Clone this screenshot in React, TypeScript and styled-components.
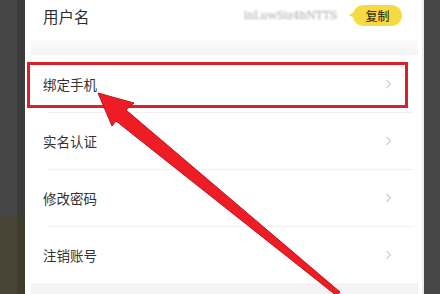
import React from "react";
import styled, { createGlobalStyle } from "styled-components";

const Global = createGlobalStyle`
  html, body { margin: 0; padding: 0; }
  body {
    width: 440px; height: 294px; overflow: hidden;
    font-family: "Noto Sans CJK SC", "Noto Sans", sans-serif;
    background: #454545;
  }
`;

const Page = styled.div`
  position: relative;
  display: flex;
  width: 440px;
  height: 294px;
`;

const LeftEdge = styled.div`
  width: 25px;
  display: grid;
  grid-template-columns: 17px 8px;
  grid-template-rows: 215px 1fr;
`;

const EdgeCell = styled.div<{ $tone: string }>`
  background: ${(p) => p.$tone};
`;

const RightEdge = styled.div`
  width: 16px;
  background: #474747;
  border-left: 2px solid #ececec;
`;

const Panel = styled.div`
  flex: 1;
  background: #ffffff;
  display: flex;
  flex-direction: column;
  padding: 0 4px 0 6px;
`;

const UserRow = styled.div`
  height: 40px;
  box-sizing: border-box;
  padding: 0 12px 9px 12px;
  display: flex;
  align-items: center;
`;

const UserLabel = styled.span`
  font-size: 15.5px;
  color: #2e2e2e;
  flex: 1;
`;

const UserName = styled.span`
  font-family: "DejaVu Serif", serif;
  font-size: 11px;
  color: #a8a8a8;
  filter: blur(1.1px);
  letter-spacing: -0.3px;
  margin-right: 16px;
`;

const CopyButton = styled.span`
  position: relative;
  width: 49px;
  height: 21px;
  border-radius: 11px;
  background: #f6da43;
  color: #3d3717;
  font-size: 12px;
  font-weight: 500;
  display: flex;
  align-items: center;
  justify-content: center;
  margin-right: 4px;
  &::before {
    content: "";
    position: absolute;
    left: -4px;
    top: 7px;
    border-style: solid;
    border-width: 3.5px 5px 3.5px 0;
    border-color: transparent #f6da43 transparent transparent;
  }
`;

const GapBand = styled.div`
  height: 15px;
  background: linear-gradient(#fcfcfc, #f3f3f3);
`;

const ItemRow = styled.div<{ $line: boolean }>`
  position: relative;
  height: 57px;
  display: flex;
  align-items: center;
  padding: 0 26px 0 12px;
  &::before {
    content: "";
    position: absolute;
    top: 0;
    left: 17px;
    right: 4px;
    height: 1px;
    background: ${(p) => (p.$line ? "#f1f1f1" : "transparent")};
  }
`;

const ItemLabel = styled.span`
  flex: 1;
  font-size: 13.5px;
  color: #333333;
`;

const Chevron = styled.svg`
  width: 7px;
  height: 10px;
`;

const BottomBand = styled.div`
  flex: 1;
  background: #f3f3f3;
`;

const Highlight = styled.div`
  position: absolute;
  left: 27px;
  top: 62px;
  width: 381px;
  height: 46px;
  box-sizing: border-box;
  border: 3.5px solid #d9212c;
  pointer-events: none;
`;

const ArrowLayer = styled.svg`
  position: absolute;
  left: 0;
  top: 0;
  width: 440px;
  height: 294px;
  pointer-events: none;
`;

const items = ["绑定手机", "实名认证", "修改密码", "注销账号"];

export default function App() {
  return (
    <>
      <Global />
      <Page>
        <LeftEdge>
          <EdgeCell $tone="#464646" />
          <EdgeCell $tone="#3b3b3b" />
          <EdgeCell $tone="#4a4436" />
          <EdgeCell $tone="#3c3d2d" />
        </LeftEdge>
        <Panel>
          <UserRow>
            <UserLabel>用户名</UserLabel>
            <UserName>lnLuwSiz4bNTTS</UserName>
            <CopyButton>复制</CopyButton>
          </UserRow>
          <GapBand />
          {items.map((t, i) => (
            <ItemRow key={t} $line={i > 0}>
              <ItemLabel>{t}</ItemLabel>
              <Chevron viewBox="0 0 7 10">
                <path d="M1.5 1 L5.5 5 L1.5 9" fill="none" stroke="#cdcdcd" strokeWidth="1.1" />
              </Chevron>
            </ItemRow>
          ))}
          <BottomBand />
        </Panel>
        <RightEdge />
        <Highlight />
        <ArrowLayer viewBox="0 0 440 294">
          <polygon
            points="98,93 134,103 126,110 340,292 337,296 116,121 112,126"
            fill="#ee1c24"
            stroke="#c0141c"
            strokeWidth="1"
            strokeLinejoin="round"
          />
        </ArrowLayer>
      </Page>
    </>
  );
}
